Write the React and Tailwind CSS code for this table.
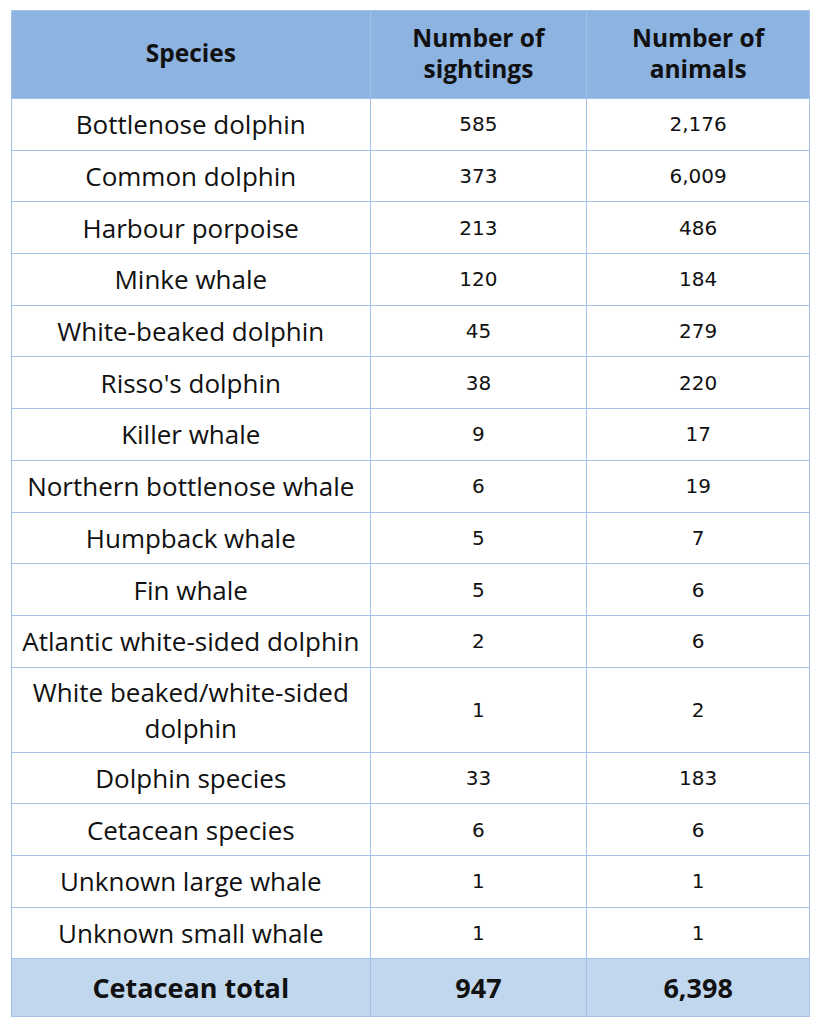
const rows = [
  ["Bottlenose dolphin", "585", "2,176"],
  ["Common dolphin", "373", "6,009"],
  ["Harbour porpoise", "213", "486"],
  ["Minke whale", "120", "184"],
  ["White-beaked dolphin", "45", "279"],
  ["Risso's dolphin", "38", "220"],
  ["Killer whale", "9", "17"],
  ["Northern bottlenose whale", "6", "19"],
  ["Humpback whale", "5", "7"],
  ["Fin whale", "5", "6"],
  ["Atlantic white-sided dolphin", "2", "6"],
  ["White beaked/white-sided dolphin", "1", "2"],
  ["Dolphin species", "33", "183"],
  ["Cetacean species", "6", "6"],
  ["Unknown large whale", "1", "1"],
  ["Unknown small whale", "1", "1"],
];

export default function App() {
  return (
    <div className="bg-white w-[821px] h-[1024px] pt-[10px] pl-[11px]">
      <table className="border-collapse w-[799px] text-[#111] font-['Open_Sans',sans-serif]">
        <colgroup>
          <col className="w-[359px]" />
          <col className="w-[217px]" />
          <col className="w-[223px]" />
        </colgroup>
        <thead>
          <tr className="bg-[#8db3e1] h-[88px]">
            <th className="border border-[#a4c2ea] text-[24.5px] font-bold leading-[31px] pb-[4px]">Species</th>
            <th className="border border-[#a4c2ea] text-[24.5px] font-bold leading-[31px] pb-[4px]">
              Number of
              <br />
              sightings
            </th>
            <th className="border border-[#a4c2ea] text-[24.5px] font-bold leading-[31px] pb-[4px]">
              Number of
              <br />
              animals
            </th>
          </tr>
        </thead>
        <tbody>
          {rows.map((r) => (
            <tr key={r[0]} className={r[0].length > 30 ? "h-[85px]" : "h-[51.7px]"}>
              <td className="border border-[#a4c2ea] text-center text-[26px] leading-[36px] px-2">{r[0]}</td>
              <td className="border border-[#a4c2ea] text-center text-[20px] font-['DejaVu_Sans',sans-serif]">{r[1]}</td>
              <td className="border border-[#a4c2ea] text-center text-[20px] font-['DejaVu_Sans',sans-serif]">{r[2]}</td>
            </tr>
          ))}
          <tr className="bg-[#c1d7ee] h-[58px]">
            <td className="border border-[#a4c2ea] text-center text-[27px] font-bold">Cetacean total</td>
            <td className="border border-[#a4c2ea] text-center text-[27px] font-bold">947</td>
            <td className="border border-[#a4c2ea] text-center text-[27px] font-bold">6,398</td>
          </tr>
        </tbody>
      </table>
    </div>
  );
}
